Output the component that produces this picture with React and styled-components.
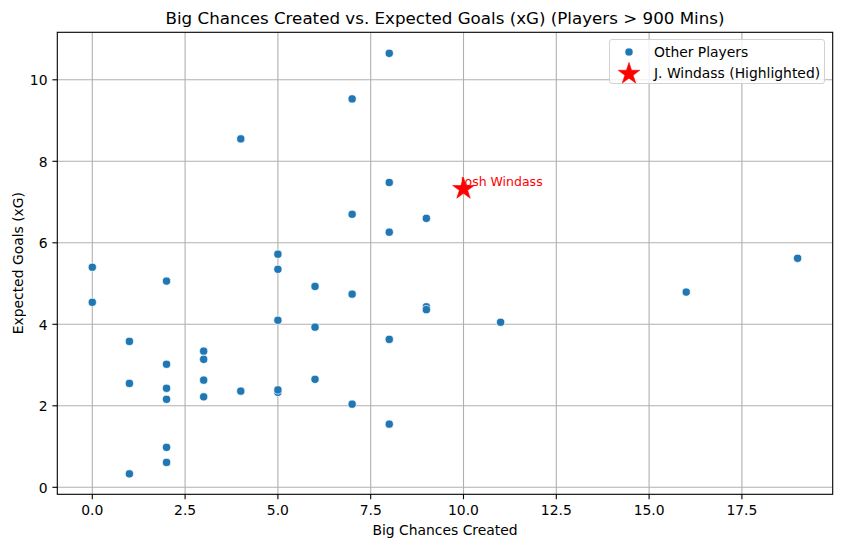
import React from "react";
import styled, { createGlobalStyle } from "styled-components";

const GlobalStyle = createGlobalStyle`
  html, body { margin: 0; padding: 0; background: #ffffff; }
  body { font-family: "DejaVu Sans", "Liberation Sans", sans-serif; }
`;

const Figure = styled.div`
  position: relative;
  width: 841px;
  height: 547px;
  display: grid;
  grid-template-columns: 26px 815px;
  grid-template-rows: 32px 490px 25px;
  font-family: "DejaVu Sans", "Liberation Sans", sans-serif;
  color: #000;
  background: #fff;
  overflow: hidden;
`;

const Title = styled.div`
  grid-column: 2;
  grid-row: 1;
  box-sizing: border-box;
  padding: 9px 8px 0 31px;
  text-align: center;
  font-size: 16.7px;
  line-height: 19px;
  white-space: nowrap;
`;

const YLabelCol = styled.div`
  grid-column: 1;
  grid-row: 2;
  box-sizing: border-box;
  padding-bottom: 28px;
  display: flex;
  align-items: center;
  justify-content: flex-end;
`;

const YLabel = styled.div`
  writing-mode: vertical-rl;
  transform: rotate(180deg);
  font-size: 13.9px;
  line-height: 16px;
  white-space: nowrap;
`;

const XLabel = styled.div`
  grid-column: 2;
  grid-row: 3;
  box-sizing: border-box;
  padding: 0 8px 0 31px;
  text-align: center;
  font-size: 13.9px;
  line-height: 16px;
  white-space: nowrap;
`;

const ChartSvg = styled.svg`
  grid-column: 2;
  grid-row: 2;
  display: block;
  overflow: visible;
`;

const Legend = styled.div`
  position: absolute;
  left: 609px;
  top: 39px;
  width: 216px;
  height: 45px;
  box-sizing: border-box;
  padding: 4.5px 0 0 5px;
  border: 1px solid #d2d2d2;
  border-radius: 3px;
  background: rgba(255, 255, 255, 0.8);
  display: flex;
  flex-direction: column;
  gap: 7px;
`;

const LegendItem = styled.div`
  display: flex;
  align-items: center;
  height: 14px;
`;

const Handle = styled.div`
  width: 28px;
  height: 14px;
  display: flex;
  align-items: center;
  justify-content: center;
  overflow: visible;
  svg { flex-shrink: 0; overflow: visible; }
`;

const LegendText = styled.span`
  margin-left: 11px;
  font-size: 13.9px;
  line-height: 14px;
  white-space: nowrap;
`;

const BLUE = "#1f77b4";
const L = 57.3, R = 832.7, T = 32.3, B = 494.3;
const X = (v) => 92.3 + 37.12 * v;
const Y = (v) => 487.3 - 40.75 * v;

const xticks = [0, 2.5, 5, 7.5, 10, 12.5, 15, 17.5];
const yticks = [0, 2, 4, 6, 8, 10];

const pts = [
  [0, 5.4], [0, 4.54], [1, 3.58], [1, 2.55], [1, 0.33],
  [2, 5.06], [2, 3.02], [2, 2.43], [2, 2.16], [2, 0.98], [2, 0.61],
  [3, 3.34], [3, 3.14], [3, 2.63], [3, 2.22],
  [4, 8.55], [4, 2.36],
  [5, 5.72], [5, 5.35], [5, 4.1], [5, 2.33], [5, 2.39],
  [6, 4.93], [6, 3.93], [6, 2.65],
  [7, 9.53], [7, 6.7], [7, 4.74], [7, 2.04],
  [8, 10.65], [8, 7.48], [8, 6.26], [8, 3.63], [8, 1.55],
  [9, 6.6], [9, 4.43], [9, 4.36],
  [11, 4.05], [16, 4.79], [19, 5.62],
];

function starPoints(cx, cy, r) {
  const ri = r * 0.381966;
  const out = [];
  for (let i = 0; i < 10; i++) {
    const a = (-90 + i * 36) * (Math.PI / 180);
    const rr = i % 2 === 0 ? r : ri;
    out.push(`${(cx + rr * Math.cos(a)).toFixed(2)},${(cy + rr * Math.sin(a)).toFixed(2)}`);
  }
  return out.join(" ");
}

const fmtX = (v) => v.toFixed(1);

export default function App() {
  return (
    <>
      <GlobalStyle />
      <Figure>
        <Title>Big Chances Created vs. Expected Goals (xG) (Players &gt; 900 Mins)</Title>
        <YLabelCol>
          <YLabel>Expected Goals (xG)</YLabel>
        </YLabelCol>
        <ChartSvg width="815" height="490" viewBox="26 32 815 490">
          <rect x={L} y={T} width={R - L} height={B - T} fill="#fff" />
          <g stroke="#b0b0b0" strokeWidth="1.1" fill="none">
            {xticks.map((t) => (
              <line key={"gx" + t} x1={X(t)} x2={X(t)} y1={T} y2={B} />
            ))}
            {yticks.map((t) => (
              <line key={"gy" + t} x1={L} x2={R} y1={Y(t)} y2={Y(t)} />
            ))}
          </g>
          <g fill={BLUE} stroke="#ffffff" strokeWidth="0.7">
            {pts.map(([x, y], i) => (
              <circle key={i} cx={X(x)} cy={Y(y)} r="4.1" />
            ))}
          </g>
          <polygon points={starPoints(X(10), Y(7.32), 11.4)} fill="#ff0000" stroke="#ff0000" strokeWidth="0.6" strokeLinejoin="miter" />
          <text x="460.8" y="186" fill="#ff0000" fontSize="12.5" fontFamily="DejaVu Sans, sans-serif">
            Josh Windass
          </text>
          <rect x={L} y={T} width={R - L} height={B - T} fill="none" stroke="#000" strokeWidth="1.1" />
          <g stroke="#000" strokeWidth="1.1">
            {xticks.map((t) => (
              <line key={"tx" + t} x1={X(t)} x2={X(t)} y1={B} y2={B + 4.9} />
            ))}
            {yticks.map((t) => (
              <line key={"ty" + t} x1={L - 4.9} x2={L} y1={Y(t)} y2={Y(t)} />
            ))}
          </g>
          <g fill="#000" fontSize="13.9" fontFamily="DejaVu Sans, sans-serif">
            {xticks.map((t) => (
              <text key={"lx" + t} x={X(t)} y="515.3" textAnchor="middle">
                {fmtX(t)}
              </text>
            ))}
            {yticks.map((t) => (
              <text key={"ly" + t} x="47.5" y={Y(t) + 5.3} textAnchor="end">
                {t}
              </text>
            ))}
          </g>
        </ChartSvg>
        <XLabel>Big Chances Created</XLabel>
        <Legend>
          <LegendItem>
            <Handle>
              <svg width="10" height="10" viewBox="-5 -5 10 10">
                <circle cx="0" cy="0" r="4.1" fill={BLUE} stroke="#fff" strokeWidth="0.7" />
              </svg>
            </Handle>
            <LegendText>Other Players</LegendText>
          </LegendItem>
          <LegendItem>
            <Handle>
              <svg width="24" height="24" viewBox="-12 -12 24 24">
                <polygon points={starPoints(0, 0.8, 11.4)} fill="#ff0000" stroke="#ff0000" strokeWidth="0.6" />
              </svg>
            </Handle>
            <LegendText>J. Windass (Highlighted)</LegendText>
          </LegendItem>
        </Legend>
      </Figure>
    </>
  );
}
